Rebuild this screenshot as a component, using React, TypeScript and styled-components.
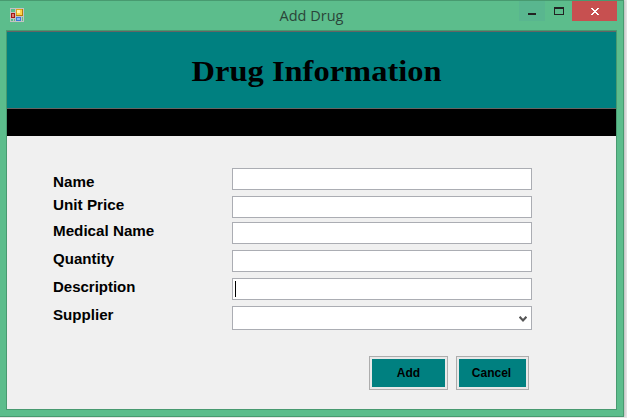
import React from "react";
import styled, { createGlobalStyle } from "styled-components";

const Global = createGlobalStyle`
  * { box-sizing: border-box; }
  body { margin: 0; background: #e6e6e6; overflow: hidden; }
`;

const Window = styled.main`
  width: 624px;
  height: 417px;
  display: flex;
  flex-direction: column;
  background: #5cbd8c;
  border: 1px solid #489a70;
  border-left: 0;
  box-shadow: 1px 0 2px #bbb;
  padding: 0 6px 6px;
`;

const TitleBar = styled.header`
  height: 29px;
  flex: none;
  display: grid;
  grid-template-columns: 200px 1fr 200px;
  align-items: start;
`;

const AppIcon = styled.svg`
  display: block;
  margin: 7px 0 0 4px;
`;

const Caption = styled.div`
  text-align: center;
  font: 14.5px/29px "Open Sans", sans-serif;
  color: #2b4539;
  white-space: nowrap;
`;

const Stretch = styled.span<{ $x: number; $origin?: string }>`
  display: inline-block;
  white-space: nowrap;
  transform: scaleX(${(p) => p.$x});
  transform-origin: ${(p) => p.$origin ?? "center"};
`;

const Controls = styled.div`
  display: flex;
  justify-content: flex-end;
`;

const Control = styled.button<{ $w: number; $bg: string }>`
  width: ${(p) => p.$w}px;
  height: 20px;
  padding: 0;
  border: 0;
  background: ${(p) => p.$bg};
  svg { display: block; }
`;

const Client = styled.section`
  flex: 1;
  width: 611px;
  border: 1px solid #489a70;
  background: #f0f0f0;
`;

const Banner = styled.div`
  height: 78px;
  border: solid #646464;
  border-width: 1px 0;
  background: #008080;
  text-align: center;
`;

const Heading = styled.h1`
  margin: 0;
  padding-left: 10px;
  font: bold 29px/78px "Liberation Serif", serif;
  color: #000;
`;

const Strip = styled.div`
  height: 27px;
  background: #000;
`;

const Form = styled.form`
  padding: 32px 0 0 46px;
`;

const Row = styled.div<{ $h: number }>`
  display: grid;
  grid-template-columns: 179px 300px;
  height: ${(p) => p.$h}px;
  align-items: start;
`;

const Label = styled.label<{ $top: number }>`
  padding-top: ${(p) => p.$top}px;
  font: bold 14px/16px "Liberation Sans", sans-serif;
  color: #000;
`;

const Field = styled.div<{ $h?: number }>`
  height: ${(p) => p.$h ?? 22}px;
  border: 1px solid #abadb3;
  background: #fff;
  display: flex;
`;

const Caret = styled.span`
  width: 1px;
  height: 16px;
  margin: 2px 0 0 2px;
  background: #000;
`;

const Arrow = styled.svg`
  margin: 9px 4px 0 auto;
`;

const Actions = styled.div`
  display: flex;
  gap: 8px;
  margin: 20px 0 0 316px;
`;

const Action = styled.button<{ $w: number }>`
  width: ${(p) => p.$w}px;
  height: 34px;
  padding: 2px;
  border: 1px solid #adadad;
  background: #e9e9e9;
`;

const Face = styled.span<{ $inset?: number }>`
  display: block;
  height: 28px;
  padding-right: ${(p) => p.$inset ?? 0}px;
  background: #008080;
  color: #000;
  font: bold 12px/28px "Liberation Sans", sans-serif;
`;

const rows = [
  { label: "Name", h: 28, top: 6, scale: 1.085 },
  { label: "Unit Price", h: 26, top: 1, scale: 1.09 },
  { label: "Medical Name", h: 28, top: 1, scale: 1.085 },
  { label: "Quantity", h: 28, top: 1, scale: 1.075 },
  { label: "Description", h: 28, top: 1, scale: 1.07, caret: true },
  { label: "Supplier", h: 30, top: 1, scale: 1.08, select: true },
];

export default function App() {
  return (
    <>
      <Global />
      <Window>
        <TitleBar>
          <AppIcon width="14" height="14" viewBox="0 0 14 14" shapeRendering="crispEdges">
            <rect width="14" height="14" fill="#c3c3c3" />
            <path d="M1 1h4v3H1zM1 11h2v2H1zM4 11h1v2H4zM12 9h1v4h-1z" fill="#5cbd8c" />
            <rect x="1" y="5" width="4" height="5" fill="#a31616" />
            <rect x="2" y="6" width="2" height="3" fill="#e07a72" />
            <rect x="6" y="1" width="7" height="7" fill="#b57d08" />
            <rect x="6" y="1" width="6" height="6" fill="#e0a21a" />
            <rect x="7" y="2" width="5" height="5" fill="#ffd24a" />
            <rect x="7" y="2" width="3" height="3" fill="#fff0ac" />
            <rect x="6" y="9" width="5" height="4" fill="#3d78d8" />
            <rect x="7" y="10" width="3" height="2" fill="#8db8f5" />
          </AppIcon>
          <Caption>Add Drug</Caption>
          <Controls>
            <Control $w={26} $bg="#59b68f" aria-label="Minimize">
              <svg width="26" height="20"><path d="M9 12h8v2H9z" fill="#222" /></svg>
            </Control>
            <Control $w={27} $bg="transparent" aria-label="Maximize">
              <svg width="27" height="20"><path fillRule="evenodd" d="M9 6h10v8H9zM10 8v5h8V8z" fill="#222" /></svg>
            </Control>
            <Control $w={45} $bg="#c75050" aria-label="Close">
              <svg width="45" height="20" shapeRendering="crispEdges">
                <path
                  d="M19 7h2v1h1v1h2V8h1V7h2v1h-1v1h-1v1h-1v1h1v1h1v1h1v1h-2v-1h-1v-1h-2v1h-1v1h-2v-1h1v-1h1v-1h1v-1h-1V9h-1V8h-1z"
                  fill="#fff"
                />
              </svg>
            </Control>
          </Controls>
        </TitleBar>
        <Client>
          <Banner>
            <Heading><Stretch $x={1.12}>Drug Information</Stretch></Heading>
          </Banner>
          <Strip />
          <Form>
            {rows.map((r) => (
              <Row key={r.label} $h={r.h}>
                <Label $top={r.top}><Stretch $x={r.scale} $origin="left">{r.label}</Stretch></Label>
                <Field $h={r.select ? 24 : 22}>
                  {r.caret && <Caret />}
                  {r.select && (
                    <Arrow width="8" height="7" viewBox="0 0 8 7">
                      <path d="M.6 .8L4 4.4 7.4 .8" fill="none" stroke="#555" strokeWidth="2.2" />
                    </Arrow>
                  )}
                </Field>
              </Row>
            ))}
            <Actions>
              <Action $w={79} type="button"><Face>Add</Face></Action>
              <Action $w={73} type="button"><Face $inset={2}>Cancel</Face></Action>
            </Actions>
          </Form>
        </Client>
      </Window>
    </>
  );
}
